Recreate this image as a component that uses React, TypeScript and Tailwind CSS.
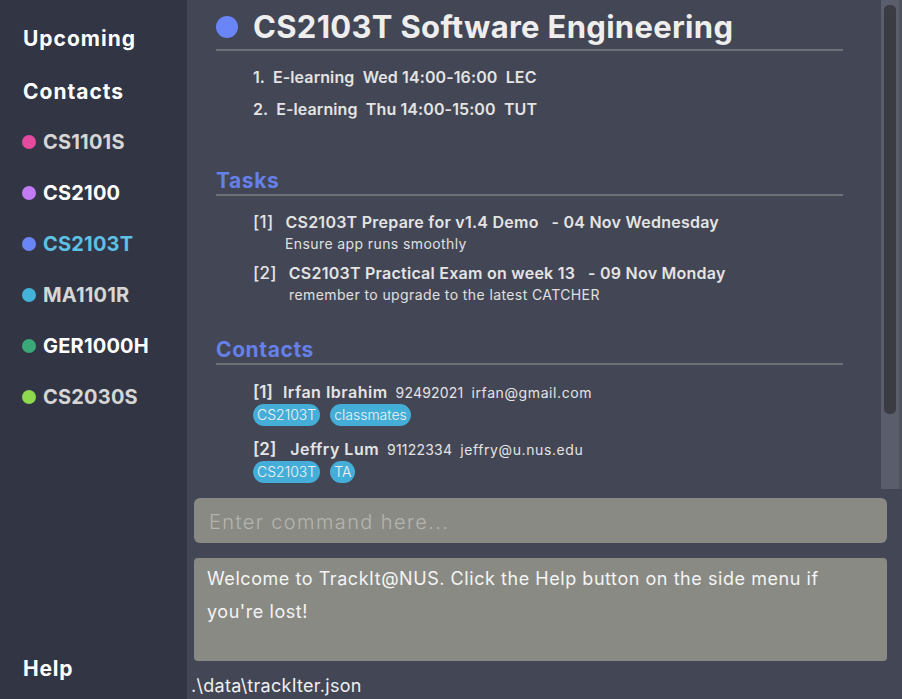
import React from 'react';

type Module = { code: string; dot: string; text: string };

const modules: Module[] = [
  { code: 'CS1101S', dot: 'bg-[#e44b9f]', text: 'text-[#d6d6d6]' },
  { code: 'CS2100', dot: 'bg-[#c17cf5]', text: 'text-white' },
  { code: 'CS2103T', dot: 'bg-[#6a85f8]', text: 'text-[#5ec0e4]' },
  { code: 'MA1101R', dot: 'bg-[#42b2d9]', text: 'text-[#d6d6d6]' },
  { code: 'GER1000H', dot: 'bg-[#3aa879]', text: 'text-white' },
  { code: 'CS2030S', dot: 'bg-[#8ed94c]', text: 'text-[#d6d6d6]' },
];

const Tag: React.FC<{ label: string }> = ({ label }) => (
  <span className="rounded-full bg-[#44aed8] px-[4px] h-[22px] leading-[22px] text-[14px] font-light text-[#f2f2f2]">
    {label}
  </span>
);

const SectionTitle: React.FC<{ title: string }> = ({ title }) => (
  <div className="border-b-2 border-[#6e6f78] mr-[38px]">
    <h2 className="text-[21px] font-bold tracking-[0.6px] text-[#6680ea] leading-[27px]">{title}</h2>
  </div>
);

const Sidebar: React.FC = () => (
  <aside className="w-[187px] shrink-0 bg-[#323543] flex flex-col pl-[22px] pt-[24px] pb-[15px]">
    <div className="text-[21px] font-bold tracking-[1px] text-white leading-[29px] pl-[1px]">Upcoming</div>
    <div className="text-[21px] font-bold tracking-[1px] text-white leading-[29px] mt-[24px] pl-[1px]">Contacts</div>
    <ul className="mt-[21px] flex flex-col gap-[22px]">
      {modules.map((m) => (
        <li key={m.code} className="flex items-center gap-[7px] h-[29px]">
          <span className={`w-[14px] h-[14px] rounded-full ${m.dot}`} />
          <span className={`text-[20px] font-bold tracking-[0.2px] ${m.text}`}>{m.code}</span>
        </li>
      ))}
    </ul>
    <div className="mt-auto text-[21px] font-bold tracking-[0.8px] text-white pl-[1px]">Help</div>
  </aside>
);

const Content: React.FC = () => (
  <div className="flex-1 pl-[29px] pt-[8px] text-[#ececec]">
    <div className="flex items-center gap-[15px] border-b-2 border-[#6e6f78] mr-[38px] pb-[3px]">
      <span className="w-[22px] h-[22px] rounded-full bg-[#6a85f8]" />
      <h1 className="text-[31px] font-bold tracking-[0.3px] leading-[38px] text-[#eeeeee]">CS2103T Software Engineering</h1>
    </div>
    <ol className="pl-[37px] mt-[15px] flex flex-col gap-[10px] text-[16px] font-semibold tracking-[0.1px] leading-[22px] text-[#e4e4e4]">
      <li className="whitespace-pre">1.  E-learning  Wed 14:00-16:00  LEC</li>
      <li className="whitespace-pre">2.  E-learning  Thu 14:00-15:00  TUT</li>
    </ol>

    <div className="mt-[47px]">
      <SectionTitle title="Tasks" />
      <div className="pl-[37px] mt-[15px] flex flex-col gap-[7px]">
        <div>
          <div className="flex gap-[12px] text-[16px] font-semibold tracking-[0.25px] leading-[22px] text-[#e4e4e4]">
            <span className="text-[17px] font-medium">[1]</span>
            <span className="whitespace-pre">CS2103T Prepare for v1.4 Demo   - 04 Nov Wednesday</span>
          </div>
          <div className="pl-[32px] text-[14px] tracking-[0.4px] leading-[22px] text-[#e0e0e0]">Ensure app runs smoothly</div>
        </div>
        <div>
          <div className="flex gap-[12px] text-[16px] font-semibold tracking-[0.25px] leading-[22px] text-[#e4e4e4]">
            <span className="text-[17px] font-medium">[2]</span>
            <span className="whitespace-pre">CS2103T Practical Exam on week 13   - 09 Nov Monday</span>
          </div>
          <div className="pl-[36px] text-[14px] tracking-[0.4px] leading-[22px] text-[#e0e0e0]">remember to upgrade to the latest CATCHER</div>
        </div>
      </div>
    </div>

    <div className="mt-[30px]">
      <SectionTitle title="Contacts" />
      <div className="pl-[37px] mt-[16px] flex flex-col gap-[12px]">
        <div>
          <div className="flex items-baseline gap-[8px] leading-[22px] text-[#e4e4e4]">
            <span className="text-[17px] font-semibold mr-[2px]">[1]</span>
            <span className="text-[16px] font-semibold tracking-[0.5px]">Irfan Ibrahim</span>
            <span className="text-[14px] tracking-[0.2px]">92492021</span>
            <span className="text-[14px] tracking-[0.6px]">irfan@gmail.com</span>
          </div>
          <div className="flex gap-[10px]">
            <Tag label="CS2103T" />
            <Tag label="classmates" />
          </div>
        </div>
        <div>
          <div className="flex items-baseline gap-[8px] leading-[22px] text-[#e4e4e4]">
            <span className="text-[17px] font-semibold mr-[6px]">[2]</span>
            <span className="text-[16px] font-semibold tracking-[0.5px]">Jeffry Lum</span>
            <span className="text-[14px] tracking-[0.2px]">91122334</span>
            <span className="text-[14px] tracking-[0.6px]">jeffry@u.nus.edu</span>
          </div>
          <div className="flex gap-[10px]">
            <Tag label="CS2103T" />
            <Tag label="TA" />
          </div>
        </div>
      </div>
    </div>
  </div>
);

const Scrollbar: React.FC = () => (
  <div className="w-[21px] shrink-0 flex">
    <div className="w-[18px] bg-[#5a5d6b] pt-[5px] px-[3px]">
      <div className="h-[409px] rounded-[5px] bg-[#3b3c43]" />
    </div>
    <div className="w-[3px] bg-[#4d505d]" />
  </div>
);

export default function App() {
  return (
    <div
      className="w-[902px] h-[699px] flex bg-[#434654] overflow-hidden"
      style={{ fontFamily: 'Inter, "Noto Sans", sans-serif' }}
    >
      <Sidebar />
      <main className="flex-1 flex flex-col">
        <div className="h-[489px] flex overflow-hidden">
          <Content />
          <Scrollbar />
        </div>
        <div className="mt-[9px] ml-[7px] mr-[15px] h-[45px] rounded-[6px] bg-[#8a8a84] flex items-center px-[15px] pt-[3px]">
          <span className="text-[20px] font-light tracking-[1.4px] text-[#b4b4ae]">Enter command here...</span>
        </div>
        <div className="mt-[15px] ml-[7px] mr-[15px] h-[103px] rounded-[4px] bg-[#8a8a84] px-[13px] pt-[4px] text-[18px] tracking-[0.55px] leading-[33px] text-[#f4f4f4]">
          Welcome to TrackIt@NUS. Click the Help button on the side menu if
          <br />
          you're lost!
        </div>
        <div className="mt-[13px] pl-[4px] text-[18px] tracking-[0.3px] text-[#f0f0f0] leading-[24px]">.\data\trackIter.json</div>
      </main>
    </div>
  );
}
